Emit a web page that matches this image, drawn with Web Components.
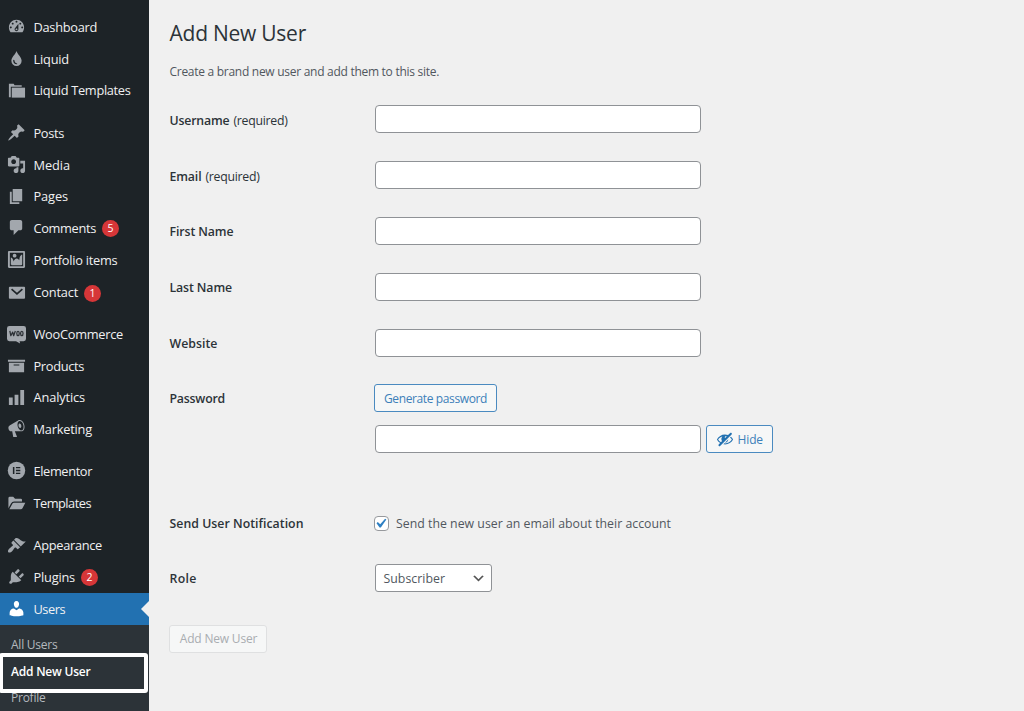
<!DOCTYPE html>
<html lang="en">
<head>
<meta charset="utf-8">
<title>Add New User</title>
<style>
html,body{margin:0;height:100%;overflow:hidden}
body{font-family:"Open Sans","Noto Sans",sans-serif;background:#f0f0f0}
</style>
</head>
<body>
<admin-shell>
  <side-menu slot="menu">
    <menu-group style="--gap:11px">
      <menu-item icon="dashboard" label="Dashboard" w="63.5"></menu-item>
      <menu-item icon="drop" label="Liquid" w="35.5"></menu-item>
      <menu-item icon="folders" label="Liquid Templates" w="97" h="31"></menu-item>
    </menu-group>
    <menu-group style="--gap:11px">
      <menu-item icon="pin" label="Posts" w="30.500"></menu-item>
      <menu-item icon="media" label="Media" w="36.500"></menu-item>
      <menu-item icon="page" label="Pages" w="34.500" h="31"></menu-item>
      <menu-item icon="comment" label="Comments" w="62.500" badge="5"></menu-item>
      <menu-item icon="image" label="Portfolio items" w="84"></menu-item>
      <menu-item icon="mail" label="Contact" w="44.500" h="33" badge="1"></menu-item>
    </menu-group>
    <menu-group>
      <menu-item icon="woo" label="WooCommerce" w="89.500" h="31"></menu-item>
      <menu-item icon="archive" label="Products" w="50.500"></menu-item>
      <menu-item icon="bars" label="Analytics" w="51.500" h="31"></menu-item>
      <menu-item icon="megaphone" label="Marketing" w="58.500"></menu-item>
    </menu-group>
    <menu-group>
      <menu-item icon="elementor" label="Elementor" w="58.500"></menu-item>
      <menu-item icon="open" label="Templates" w="57.500" h="33"></menu-item>
    </menu-group>
    <menu-group>
      <menu-item icon="brush" label="Appearance" w="68.500" h="31"></menu-item>
      <menu-item icon="plug" label="Plugins" w="41.500" badge="2"></menu-item>
      <menu-item icon="user" label="Users" w="31.500" current></menu-item>
    </menu-group>
    <sub-menu slot="sub"></sub-menu>
  </side-menu>

  <user-form></user-form>
</admin-shell>

<script>
const G = {
  dashboard:'<path fill-rule="evenodd" d="M3.76 16h12.48c1.1-1.37 1.76-3.11 1.76-5 0-4.42-3.58-8-8-8s-8 3.58-8 8c0 1.89.66 3.63 1.76 5zM10 4c.55 0 1 .45 1 1s-.45 1-1 1-1-.45-1-1 .45-1 1-1zM6 6c.55 0 1 .45 1 1s-.45 1-1 1-1-.45-1-1 .45-1 1-1zm8 0c.55 0 1 .45 1 1s-.45 1-1 1-1-.45-1-1 .45-1 1-1zm-5.37 5.55L12 7v6c0 1.1-.9 2-2 2s-2-.9-2-2c0-.57.24-1.08.63-1.45zM4 10c.55 0 1 .45 1 1s-.45 1-1 1-1-.45-1-1 .45-1 1-1zm12 0c.55 0 1 .45 1 1s-.45 1-1 1-1-.45-1-1 .45-1 1-1zm-5 3c0-.55-.45-1-1-1s-1 .45-1 1 .45 1 1 1 1-.45 1-1z"/>',
  drop:'<path fill-rule="evenodd" d="M10 2c1.1 4 5.4 6.2 5.4 10.3a5.4 5.6 0 0 1-10.8 0C4.600 8.200 8.900 6 10 2zM6.500 11.800c-.1 2.600 1.500 4.300 3.900 4.300.5-.1.5-.6.1-.8-1.600-.5-2.500-1.600-2.700-3.500-.2-.8-1.200-.8-1.300 0z"/>',
  folders:'<path d="M2 3h5l1 1.500h7.500V6H4v11H2z"/><path d="M5 7h14v10.500H5z"/>',
  pin:'<path d="M10.44 3.02l1.820-1.820 6.360 6.350-1.830 1.820c-1.050-.68-2.480-.57-3.410.36l-.75.75c-.92.93-1.040 2.350-.35 3.410l-1.830 1.820-2.410-2.410-2.800 2.790c-.42.42-3.380 2.710-3.800 2.290s1.860-3.390 2.280-3.810l2.790-2.790L4.100 9.360l1.830-1.820c1.050.69 2.480.57 3.400-.36l.75-.75c.93-.92 1.050-2.350.36-3.410z"/>',
  media:'<path fill-rule="evenodd" d="M13 11V4c0-.55-.45-1-1-1h-1.67L9 1H5L3.67 3H2c-.55 0-1 .45-1 1v7c0 .55.45 1 1 1h10c.55 0 1-.45 1-1zM7 4.500c1.380 0 2.500 1.120 2.500 2.500S8.380 9.500 7 9.500 4.500 8.380 4.500 7 5.620 4.500 7 4.500zM14 6h5v10.500c0 1.380-1.120 2.500-2.500 2.500S14 17.880 14 16.500s1.120-2.500 2.500-2.500c.17 0 .34.02.5.05V9h-3V6zm-4 8.050V13h2v3.500c0 1.380-1.120 2.500-2.500 2.500S7 17.880 7 16.500 8.120 14 9.500 14c.17 0 .34.02.5.05z"/>',
  page:'<path d="M6 15V2h10v13H6zm-1 1h8v2H3V5h2v11z"/>',
  comment:'<path d="M5 2h9c1.100 0 2 .9 2 2v7c0 1.100-.9 2-2 2h-2l-5 5v-5H5c-1.100 0-2-.9-2-2V4c0-1.100.9-2 2-2z"/>',
  image:'<path fill-rule="evenodd" d="M2.250 1h15.500c.69 0 1.250.56 1.250 1.250v15.500c0 .69-.56 1.250-1.250 1.250H2.250C1.560 19 1 18.440 1 17.750V2.250C1 1.560 1.560 1 2.250 1zM17 17V3H3v14h14zM10 6c0-1.100-.9-2-2-2s-2 .9-2 2 .9 2 2 2 2-.9 2-2zm3 5s0-6 3-6v10c0 .55-.45 1-1 1H5c-.55 0-1-.45-1-1V8c2 0 3 4 3 4s1-3 3-3 3 2 3 2z"/>',
  mail:'<path d="M3 4h15q1 0 1 1v10.500q0 1-1 1H3q-1 0-1-1V5q0-1 1-1z"/><path d="M4.800 6.500l5.700 5 5.700-5" fill="none" stroke="#1d2327" stroke-width="1.700"/>',
  woo:'<path d="M2.500 1h15Q20 1 20 3.500v11q0 2.500-2.500 2.500h-4.300l.6 2.500L9.500 17h-7Q0 17 0 14.500v-11Q0 1 2.500 1z"/><g fill="none" stroke="#2b3035" stroke-width="1.300" stroke-linejoin="round"><path d="M3 6.300l1 5L6 7.500l1 3.800L8.800 6.300"/><ellipse cx="11.600" cy="9" rx="1.300" ry="2.200"/><ellipse cx="15.600" cy="9" rx="1.300" ry="2.200"/></g>',
  archive:'<path fill-rule="evenodd" d="M19 4v2H1V4h18zM2 7h16v10H2V7zm11 3V9H7v1h6z"/>',
  bars:'<path d="M18 18V2h-4v16h4zm-6 0V7H8v11h4zm-6 0v-8H2v8h4z"/>',
  megaphone:'<path fill-rule="evenodd" d="M18.150 5.940c.46 1.620.38 3.220-.02 4.480-.42 1.280-1.260 2.180-2.300 2.480-.16.06-.26.06-.4.06-.06.02-.12.02-.18.02-.06.02-.14.02-.22.02h-6.800l2.220 5.500c.02.14-.06.26-.14.34-.08.1-.24.16-.34.16H6.950c-.1 0-.26-.06-.34-.16-.08-.08-.16-.2-.14-.34l-1-5.500H4.250l-.02-.02c-.5.06-1.080-.18-1.540-.62s-.88-1.080-1.060-1.880c-.24-.8-.2-1.560-.02-2.200.18-.62.58-1.080 1.060-1.300l.02-.02 9-5.400c.1-.06.18-.1.24-.16.06-.04.14-.08.24-.12.16-.08.28-.12.5-.18 1.040-.3 2.240.1 3.220.98s1.840 2.240 2.260 3.860zm-2.580 5.980h-.02c.4-.1.74-.34 1.040-.7.58-.7.86-1.760.86-3.040 0-.64-.1-1.300-.28-1.980-.34-1.360-1.020-2.500-1.780-3.240s-1.680-1.100-2.460-.88c-.82.22-1.400.96-1.700 2-.32 1.040-.28 2.360.06 3.720.38 1.360 1 2.500 1.800 3.240.78.74 1.620 1.100 2.480.88zm-2.540-7.080c.22-.04.42-.02.62.04.38.16.76.48 1.020 1s.42 1.200.42 1.780c0 .3-.04.56-.12.8-.18.48-.44.84-.86.94-.34.1-.8-.06-1.140-.4s-.64-.86-.78-1.500c-.18-.62-.12-1.240.02-1.720s.48-.84.82-.94z"/>',
  elementor:'<circle cx="10" cy="10" r="9.200"/><path d="M6.200 6.200h1.600v7.600H6.200zM9.400 6.200h4.600v1.400H9.400zM9.400 9.300h4.600v1.400H9.400zM9.400 12.400h4.600v1.400H9.400z" fill="#1d2327"/>',
  open:'<path d="M1.500 15V4.500q0-1.500 1.500-1.500h3.500L8.500 5h6q1.300 0 1.300 1.300V8H7.500Q5.300 8 4.200 10z"/><path d="M2.500 16l3-5.500Q6 9.200 7.500 9.200h11.800l-3 5.800q-.6 1-1.800 1z"/>',
  brush:'<path d="M14.480 11.060L7.410 3.990l1.500-1.500c.5-.56 2.300-.47 3.510.32 1.210.8 1.430 1.280 2.910 2.100 1.180.64 2.450 1.260 4.450.85zm-.71.71L6.700 4.700 4.930 6.470c-.39.39-.39 1.020 0 1.410l1.060 1.060c.39.39.39 1.030 0 1.420-.6.6-1.430 1.110-2.210 1.690-.35.26-.7.53-1.010.84C1.430 14.230.4 16.080 1.400 17.070c.99 1 2.840-.03 4.180-1.360.31-.31.58-.66.85-1.020.57-.78 1.080-1.610 1.690-2.210.39-.39 1.020-.39 1.410 0l1.060 1.060c.39.39 1.020.39 1.410 0z"/>',
  plug:'<path d="M13.110 4.360L9.870 7.600 8 5.730l3.240-3.240c.35-.34 1.050-.2 1.560.32.52.51.66 1.210.31 1.550zm-8 1.770l.91-1.120 9.010 9.010-1.190.84c-.71.71-2.630 1.160-3.820 1.160H6.140L4.900 17.260c-.59.59-1.540.59-2.120 0-.59-.58-.59-1.530 0-2.120l1.240-1.240v-3.880c0-1.130.4-3.190 1.090-3.890zm7.260 3.970l3.240-3.240c.34-.35 1.040-.21 1.550.31.52.51.66 1.210.31 1.550l-3.240 3.250z"/>',
  user:'<path d="M10 9.250c-2.270 0-2.730-3.440-2.730-3.440C7 4.020 7.820 2 9.970 2c2.160 0 2.980 2.020 2.710 3.810 0 0-.41 3.440-2.680 3.440zm0 2.570L12.720 10c2.390 0 4.520 2.330 4.520 4.530v2.490s-3.650 1.130-7.240 1.130c-3.650 0-7.240-1.130-7.240-1.130v-2.490c0-2.250 1.940-4.480 4.470-4.480z"/>',
  hidden:'<path fill-rule="evenodd" d="M17.200 3.300l.16.17c.39.39.39 1.020 0 1.410L4.550 17.700c-.39.39-1.030.39-1.410 0l-.17-.17c-.39-.39-.39-1.020 0-1.410l1.590-1.600c-1.570-1-2.760-2.300-3.560-3.930.81-1.650 2.030-2.980 3.640-3.990S8.040 5.090 10 5.090c1.200 0 2.330.21 3.400.6l2.380-2.390c.39-.39 1.030-.39 1.420 0zm-7.090 4.010c-.23.25-.34.54-.34.88 0 .31.12.58.31.81l1.800-1.790c-.13-.12-.28-.21-.45-.26-.11-.01-.28-.03-.49-.04-.33.03-.6.16-.83.4zM2.400 10.590c.69 1.230 1.710 2.250 3.050 3.050l1.280-1.280c-.51-.69-.77-1.470-.77-2.360 0-1.060.36-1.980 1.090-2.760-1.040.27-1.960.7-2.760 1.260-.8.58-1.430 1.270-1.890 2.090zm13.220-2.130l.96-.96c1.020.86 1.830 1.890 2.420 3.090-.81 1.650-2.030 2.980-3.640 3.990s-3.400 1.510-5.360 1.510c-.63 0-1.240-.07-1.830-.18l1.070-1.070c.25.02.5.05.76.05 1.630 0 3.130-.4 4.500-1.210s2.400-1.840 3.100-3.090c-.46-.82-1.090-1.510-1.890-2.090-.03-.01-.06-.03-.09-.04zm-5.580 5.580c.95-.01 1.780-.41 2.490-1.100.73-.73 1.110-1.620 1.170-2.660z"/>',
  check:'<path d="M14.830 4.890l1.340.94-5.810 8.380H9.020L5.780 9.670l1.340-1.250 2.570 2.400z"/>',
  chevron:'<path d="M5 6l5 5 5-5 2 1-7 7-7-7 2-1z"/>'
};

class Base extends HTMLElement {
  connectedCallback(){
    if(this.shadowRoot) return;
    this.attachShadow({mode:'open'}).innerHTML = this.render();
  }
  a(n,d=''){ return this.getAttribute(n) ?? d; }
}
const def = (n,c) => customElements.define(n,c);

/* Text that tracks its letters to reach a given width. */
def('fit-text', class extends Base {
  render(){ return `<style>:host{display:block;white-space:nowrap;line-height:1.35}span{display:inline-block}</style><span>${this.a('text')}</span>`; }
  connectedCallback(){
    super.connectedCallback();
    const s=this.shadowRoot.querySelector('span'), w=+this.a('w',0);
    if(w) s.style.letterSpacing=((w-s.getBoundingClientRect().width)/this.a('text').length).toFixed(3)+'px';
  }
});

def('ui-icon', class extends Base {
  render(){ return `<style>:host{display:block;flex:none;width:19px;height:19px}svg{display:block;width:100%;height:100%;fill:currentColor;overflow:visible}</style><svg viewBox="0 0 20 20">${G[this.a('name')]}</svg>`; }
});

def('admin-shell', class extends Base {
  render(){ return `<style>:host{display:grid;grid-template-columns:149px 1fr;height:100vh;overflow:hidden}</style><slot name="menu"></slot><slot></slot>`; }
});

def('side-menu', class extends Base {
  render(){ return `<style>:host{display:flex;flex-direction:column;background:#1d2327;color:#f0f0f1;min-width:0;min-height:0}</style><slot></slot><slot name="sub"></slot>`; }
});

def('menu-group', class extends Base {
  render(){ return `<style>:host{display:flex;flex-direction:column;flex:none;padding-top:var(--gap,10px)}</style><slot></slot>`; }
});

def('menu-item', class extends Base {
  render(){
    const even = !this.hasAttribute('h');
    return `<style>
    :host{display:flex;flex:none;align-items:center;height:${this.a('h','32')}px;padding-left:7px;gap:7.500px;position:relative;font-size:12.800px}
    ui-icon{color:#a2a7ad;margin-top:${even?-1:0}px}
    fit-text{margin-top:${even?2:0}px}
    :host([current]){background:#2271b1}
    :host([current]) ui-icon{color:#fff}
    :host([current])::after{content:"";position:absolute;right:0;top:8px;border:8px solid transparent;border-left:0;border-right-color:#f0f0f0}
    b{display:grid;place-items:center;width:17px;height:17px;margin:1px 0 0 -1.500px;border-radius:50%;background:#d63638;color:#fff;font-size:10.500px;font-weight:400;line-height:1}
    </style><ui-icon name="${this.a('icon')}"></ui-icon><fit-text text="${this.a('label')}" w="${this.a('w')}"></fit-text>${this.a('badge')?`<b>${this.a('badge')}</b>`:''}`; }
});

def('sub-menu', class extends Base {
  render(){ return `<style>
    :host{display:flex;flex-direction:column;flex:1;background:#2c3338;color:#b4b9be;font-size:12px;padding:6px 0 0 11px;position:relative}
    fit-text{height:26.500px;line-height:27px;flex:none}
    .on{color:#fff;font-weight:600}
    i{position:absolute;box-sizing:border-box;left:-1px;top:27.500px;width:149px;height:40px;border:4px solid #fff;border-radius:3px}
    </style>
    <fit-text text="All Users" w="46.500"></fit-text><fit-text class="on" text="Add New User" w="79.500"></fit-text><fit-text text="Profile" w="34.500"></fit-text><i></i>`; }
});

def('text-field', class extends Base {
  render(){ return `<style>:host{display:block;width:326px;height:28px}input{display:block;box-sizing:border-box;width:100%;height:100%;margin:0;border:1px solid #8f9296;border-radius:4px;background:#fff;outline:0}</style><input type="text">`; }
});

def('ui-button', class extends Base {
  render(){ return `<style>
    :host{display:block}
    button{display:flex;align-items:center;justify-content:center;gap:4px;box-sizing:border-box;width:${this.a('width')}px;height:28px;margin:0;padding:0;border:1px solid #4a8ac0;border-radius:3px;background:#f6f7f7;color:#3c80b9;font:12px "Open Sans","Noto Sans",sans-serif}
    button:disabled{border-color:#dfe0e1;color:#a9adb1}
    button:enabled fit-text{margin-top:2px}
    button:disabled fit-text{margin-left:1px}
    ui-icon{width:18px;height:18px;color:#2271b1}
    </style><button ${this.hasAttribute('disabled')?'disabled':''}>${this.a('icon')?`<ui-icon name="${this.a('icon')}"></ui-icon>`:''}<fit-text text="${this.a('label')}" w="${this.a('w')}"></fit-text></button>`; }
});

def('form-row', class extends Base {
  render(){ return `<style>
    :host{display:grid;grid-template-columns:206px 1fr;align-items:start;height:var(--row,56px)}
    div{display:flex;align-items:center;box-sizing:border-box;height:30px;gap:4px;padding-left:.5px;font-size:12.300px;color:#2c3338}
    :host([required]) div{height:32px}
    .l{font-weight:600}.n{font-weight:400}
    </style><div><fit-text class="l" text="${this.a('label')}" w="${this.a('w')}"></fit-text>${this.hasAttribute('required')?'<fit-text class="n" text="(required)" w="54"></fit-text>':''}</div><slot></slot>`; }
});

def('check-box', class extends Base {
  render(){ return `<style>
    :host{display:flex;align-items:center;height:29px;gap:7px;margin-left:-1px;font-size:12.300px;color:#50575e}
    span{box-sizing:border-box;width:15px;height:15px;border:1px solid #97999d;border-radius:4px;background:#fff;color:#2f80c3}
    ui-icon{width:19px;height:19px;margin:-3px 0 0 -4px}
    fit-text{margin-top:2px}
    </style><span><ui-icon name="check"></ui-icon></span><fit-text text="${this.a('label')}" w="${this.a('w')}"></fit-text>`; }
});

def('select-box', class extends Base {
  render(){ return `<style>
    :host{display:flex;align-items:center;justify-content:space-between;box-sizing:border-box;width:117px;height:28px;padding:0 5px 0 7.500px;border:1px solid #8f9296;border-radius:3px;background:#fff;font-size:12.300px;color:#50575e}
    ui-icon{width:15px;height:15px;color:#555}
    fit-text{margin-top:2px}
    </style><fit-text text="${this.a('value')}" w="${this.a('w')}"></fit-text><ui-icon name="chevron"></ui-icon>`; }
});

def('user-form', class extends Base {
  render(){ return `<style>
    :host{display:block;background:#f0f0f0;padding:19px 0 0 20px;color:#50575e}
    .h{font-size:21px;height:29px;color:#2c3338;padding-left:.5px}
    .p{font-size:12px;margin:16px 0 25px;padding-left:.5px}
    .pw{display:flex;flex-direction:column;gap:13px}
    .line{display:flex;gap:4.500px}
    </style>
    <fit-text class="h" text="Add New User" w="136.500"></fit-text>
    <fit-text class="p" text="Create a brand new user and add them to this site." w="269.500"></fit-text>
    <form-row label="Username" w="60" required><text-field></text-field></form-row>
    <form-row label="Email" w="32" required><text-field></text-field></form-row>
    <form-row label="First Name" w="64"><text-field></text-field></form-row>
    <form-row label="Last Name" w="62.500"><text-field></text-field></form-row>
    <form-row label="Website" w="48" style="--row:55px"><text-field></text-field></form-row>
    <form-row label="Password" w="55.500" style="--row:125px"><div class="pw">
      <ui-button style="margin-left:-1px" width="123" label="Generate password" w="103"></ui-button>
      <div class="line"><text-field></text-field><ui-button width="67.500" icon="hidden" label="Hide" w="25.500"></ui-button></div>
    </div></form-row>
    <form-row label="Send User Notification" w="134" style="--row:55px"><check-box label="Send the new user an email about their account" w="275"></check-box></form-row>
    <form-row label="Role" w="27" style="--row:61px"><select-box value="Subscriber" w="61.500"></select-box></form-row>
    <ui-button width="98" label="Add New User" w="77.500" disabled></ui-button>`; }
});
</script>
</body>
</html>
